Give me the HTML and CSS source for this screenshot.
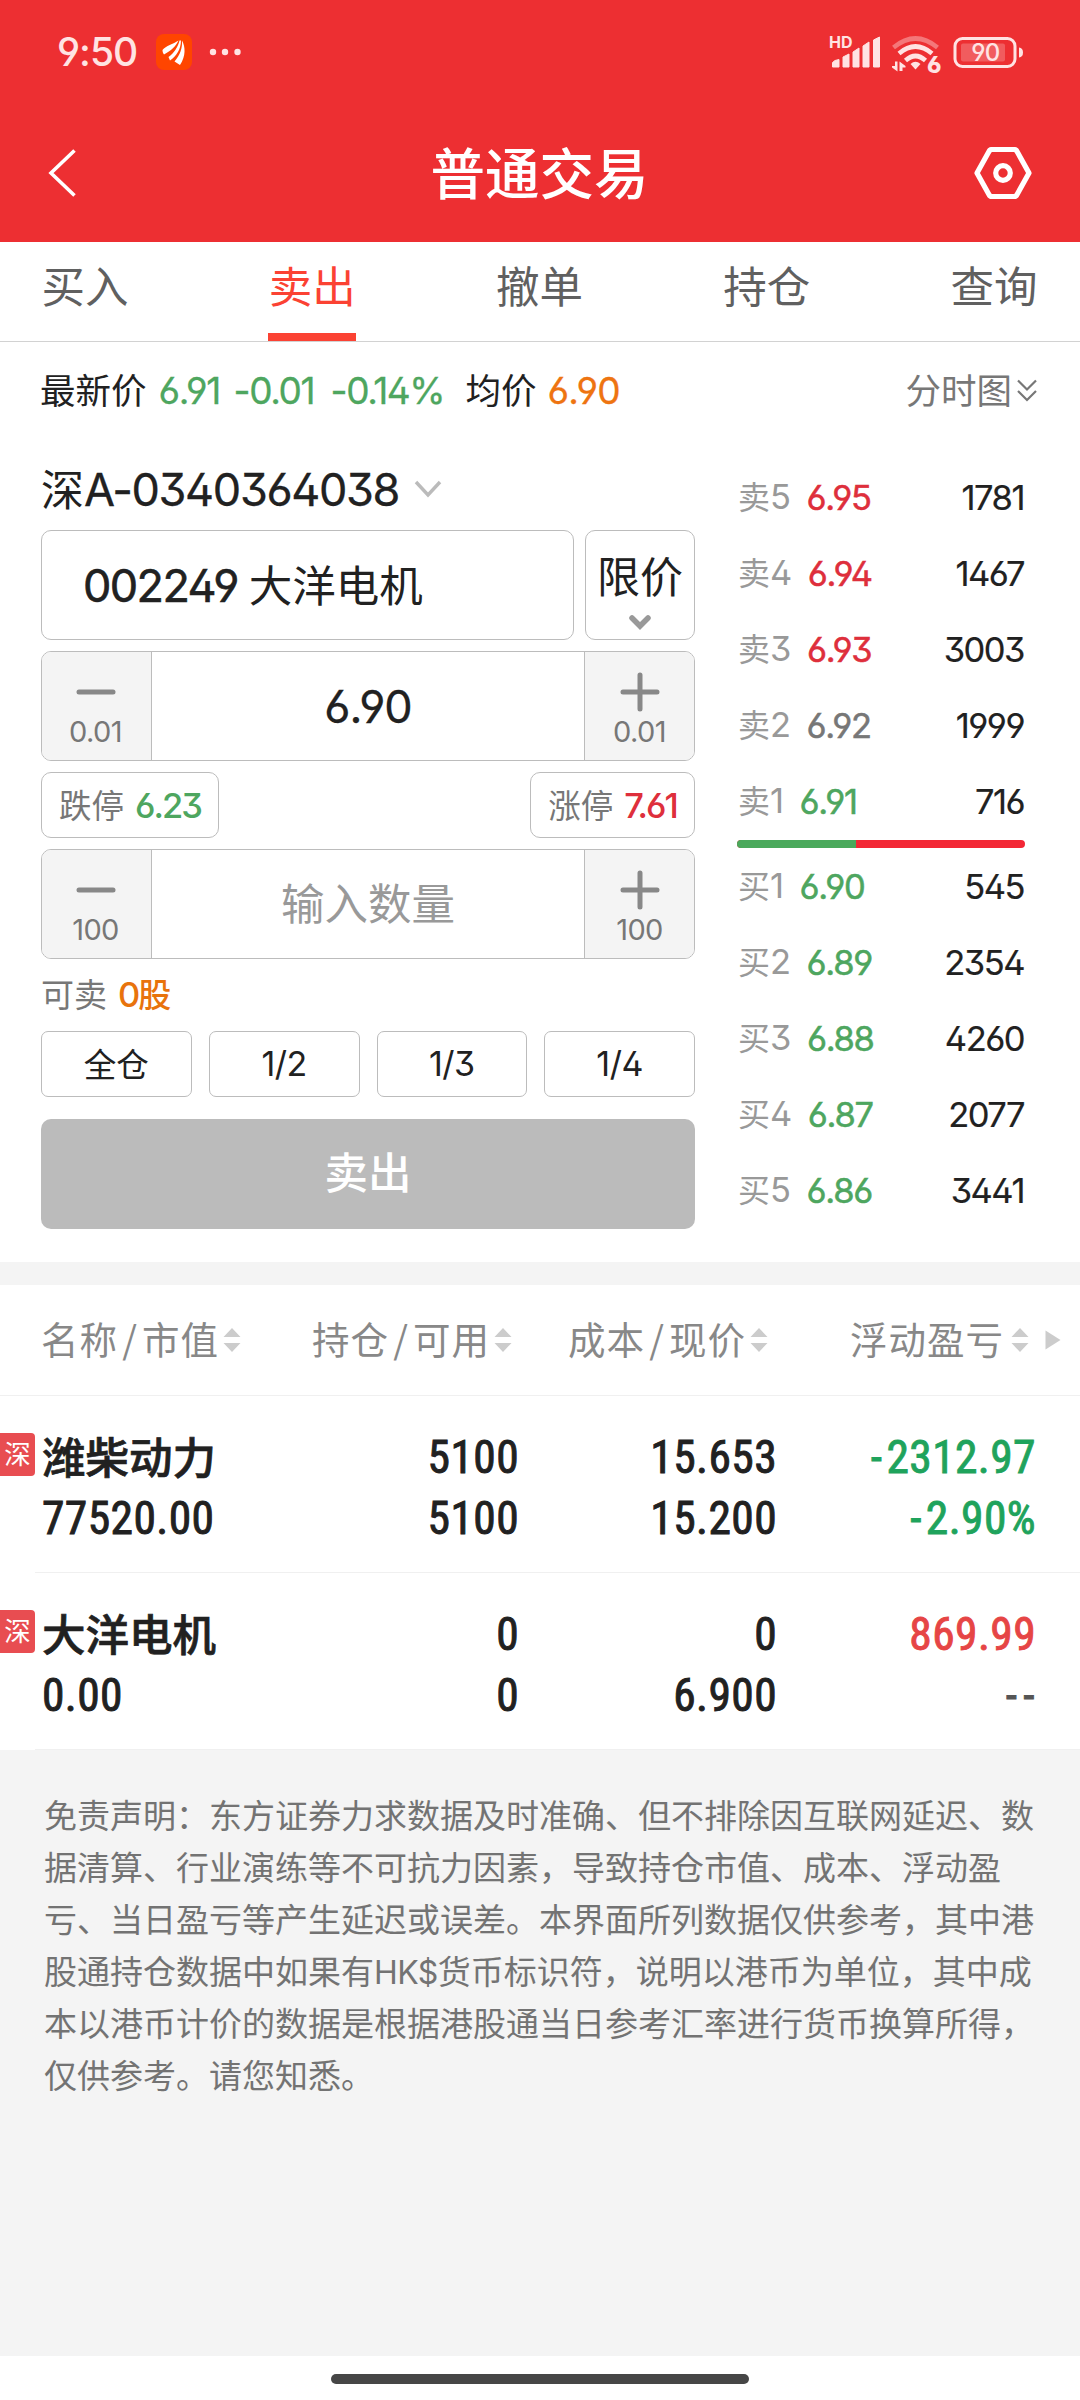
FILE: index.html
```html
<!DOCTYPE html>
<html lang="zh-CN">
<head>
<meta charset="utf-8">
<title>普通交易</title>
<link rel="stylesheet" href="styles.css">
</head>
<body>
<header class="header">
  <div class="status">
    <span class="clock">9:50</span>
    <svg class="app-icon" width="36" height="36" viewBox="0 0 36 36"><rect width="36" height="36" rx="8" fill="#ff4500"/><g fill="#fff"><path d="M6.500 16C10 11.500 17 10.500 22.500 6.500C20 12 15 17 8 20.500C7 19 6.500 18 6.500 16Z"/><path d="M12.500 23C18 19 22 13 23.500 6.500L25 6.500C25 15 20.500 22 14 26.500Z"/><path d="M18.500 27.500C24 21 26.500 14 26 6.500C29.500 13 30 22 24 31Z"/></g></svg>
    <svg class="dots" width="32" height="8" viewBox="0 0 32 8" fill="#ffe3e3"><circle cx="4" cy="4" r="3.200"/><circle cx="16" cy="4" r="3.200"/><circle cx="28.500" cy="4" r="3.200"/></svg>
    <svg class="signals" width="196" height="52" viewBox="0 -4 196 52" fill="#ffe3e3">
      <text x="1" y="18" class="hd">HD</text>
      <path d="M4.500 37V32.500L7 30.500L11 29.500V37ZM15 37V27L21 24V37ZM25 37V22L31 18V37ZM35 37V16L41 12V37ZM45.500 37V10L51.500 7V37Z" stroke="#ffe3e3" stroke-width="1" stroke-linejoin="round"/>
      <g fill="none" stroke="#ffe3e3" stroke-width="4.600"><path d="M65.500 17.500Q87.500 -.5 109.500 17.500" stroke-opacity=".4"/><path d="M71 23.500Q87.500 9.500 104 23.500"/><path d="M77.500 30.500Q87.500 21.500 97.500 30.500"/></g>
      <path d="M82.500 34Q87.500 29.500 92.500 34L87.500 39.500Z"/>
      <path d="M64 36H67V31.500H69.500V41.500L64 37.500ZM71.500 31.500L77.500 36V37.500H74.500V41H71.500Z"/>
      <text x="99" y="42.500" class="wifi-six">6</text>
      <rect x="127" y="8.500" width="60" height="28" rx="7.500" fill="none" stroke="#ffe3e3" stroke-width="3"/>
      <rect x="133" y="13.500" width="44" height="18" rx="2" fill-opacity=".25"/>
      <path d="M191 17.500Q195 18 195 22.500T191 27.500Z"/>
      <text x="157.500" y="31" class="battery">90</text>
    </svg>
  </div>
  <div class="title-bar">
    <svg width="30" height="50" viewBox="0 0 30 50" fill="none" stroke="#fff" stroke-width="3.600"><path d="M27.500 2.500L4 25L27.500 47.500"/></svg>
    <h1>普通交易</h1>
    <svg width="60" height="56" viewBox="0 0 60 56" fill="none" stroke="#fff" stroke-width="5.200" stroke-linejoin="round"><path d="M18 4.500H42L43.500 5.500L56 28L43.500 50.500L42 51.500H18L16.500 50.500L4 28L16.500 5.500Z"/><circle cx="30" cy="28" r="7.300"/></svg>
  </div>
</header>
<nav class="tabs"><a>买入</a><a class="on">卖出</a><a>撤单</a><a>持仓</a><a>查询</a></nav>
<div class="quote">
  <span>最新价</span><b class="green q1">6.91</b><b class="green q2">-0.01</b><b class="green q3">-0.14%</b><span class="avg">均价</span><b class="orange q4">6.90</b>
  <span class="chart">分时图</span><svg width="20" height="24" viewBox="0 0 20 24" fill="none" stroke="#777" stroke-width="2.200"><path d="M1 1.500L10 10.500L19 1.500M1 12L10 21L19 12"/></svg>
</div>
<main class="trade">
  <section class="form">
    <div class="account"><span>深</span><b>A-0340364038</b><svg width="28" height="18" viewBox="0 0 28 18" fill="none" stroke="#bbb" stroke-width="3.400"><path d="M2 2L14 15L26 2"/></svg></div>
    <div class="pick">
      <div class="box stock"><b>002249</b><span>大洋电机</span></div>
      <div class="box limit"><span>限价</span><svg width="24" height="16" viewBox="0 0 24 16" fill="none" stroke="#999" stroke-width="5.500" stroke-linecap="round"><path d="M4 4L12 12L20 4"/></svg></div>
    </div>
    <div class="box stepper">
      <div class="side"><svg width="40" height="40" viewBox="0 0 40 40" stroke="#888" stroke-width="5" stroke-linecap="round"><path d="M3 20H37"/></svg><b>0.01</b></div>
      <div class="value"><b>6.90</b></div>
      <div class="side"><svg width="40" height="40" viewBox="0 0 40 40" stroke="#888" stroke-width="5" stroke-linecap="round"><path d="M3 20H37M20 3V37"/></svg><b>0.01</b></div>
    </div>
    <div class="bounds">
      <div class="box bound down"><span>跌停</span><b class="green">6.23</b></div>
      <div class="box bound up"><span>涨停</span><b class="red">7.61</b></div>
    </div>
    <div class="box stepper">
      <div class="side"><svg width="40" height="40" viewBox="0 0 40 40" stroke="#888" stroke-width="5" stroke-linecap="round"><path d="M3 20H37"/></svg><b>100</b></div>
      <div class="value placeholder">输入数量</div>
      <div class="side"><svg width="40" height="40" viewBox="0 0 40 40" stroke="#888" stroke-width="5" stroke-linecap="round"><path d="M3 20H37M20 3V37"/></svg><b>100</b></div>
    </div>
    <div class="avail"><span>可卖</span><em><b>0</b>股</em></div>
    <div class="parts"><div class="box">全仓</div><div class="box"><b>1/2</b></div><div class="box"><b>1/3</b></div><div class="box"><b>1/4</b></div></div>
    <div class="submit">卖出</div>
  </section>
  <section class="book">
    <div class="lv"><span>卖<b>5</b></span><b class="red">6.95</b><b class="vol">1781</b></div>
    <div class="lv"><span>卖<b>4</b></span><b class="red">6.94</b><b class="vol">1467</b></div>
    <div class="lv"><span>卖<b>3</b></span><b class="red">6.93</b><b class="vol">3003</b></div>
    <div class="lv"><span>卖<b>2</b></span><b class="flat">6.92</b><b class="vol">1999</b></div>
    <div class="lv"><span>卖<b>1</b></span><b class="green">6.91</b><b class="vol">716</b></div>
    <div class="ratio"><i></i></div>
    <div class="lv"><span>买<b>1</b></span><b class="green">6.90</b><b class="vol">545</b></div>
    <div class="lv"><span>买<b>2</b></span><b class="green">6.89</b><b class="vol">2354</b></div>
    <div class="lv"><span>买<b>3</b></span><b class="green">6.88</b><b class="vol">4260</b></div>
    <div class="lv"><span>买<b>4</b></span><b class="green">6.87</b><b class="vol">2077</b></div>
    <div class="lv"><span>买<b>5</b></span><b class="green">6.86</b><b class="vol">3441</b></div>
  </section>
</main>
<section class="holdings">
  <div class="thead">
    <div class="h1c">名称<i>/</i>市值<svg width="18" height="24" viewBox="0 0 18 24" fill="#ccc"><path d="M9 0L17.500 9H.5ZM.5 15H17.500L9 24Z"/></svg></div>
    <div class="h2c">持仓<i>/</i>可用<svg width="18" height="24" viewBox="0 0 18 24" fill="#ccc"><path d="M9 0L17.500 9H.5ZM.5 15H17.500L9 24Z"/></svg></div>
    <div class="h3c">成本<i>/</i>现价<svg width="18" height="24" viewBox="0 0 18 24" fill="#ccc"><path d="M9 0L17.500 9H.5ZM.5 15H17.500L9 24Z"/></svg></div>
    <div class="h4c">浮动盈亏<svg width="18" height="24" viewBox="0 0 18 24" fill="#ccc"><path d="M9 0L17.500 9H.5ZM.5 15H17.500L9 24Z"/></svg></div>
    <svg class="more" width="16" height="20" viewBox="0 0 16 20" fill="#ccc"><path d="M.5 .5L15.500 10L.5 19.500Z"/></svg>
  </div>
  <div class="row">
    <div class="badge">深</div>
    <div class="cells">
      <strong>潍柴动力</strong><b>5100</b><b>15.653</b><b class="loss"><i>-</i>2312.97</b>
      <b>77520.00</b><b>5100</b><b>15.200</b><b class="loss"><i>-</i>2.90%</b>
    </div>
  </div>
  <div class="row">
    <div class="badge">深</div>
    <div class="cells">
      <strong>大洋电机</strong><b>0</b><b>0</b><b class="gain">869.99</b>
      <b>0.00</b><b>0</b><b>6.900</b><b class="none"><i>-</i><i>-</i></b>
    </div>
  </div>
</section>
<footer class="note">
  <p>免责声明：东方证券力求数据及时准确、但不排除因互联网延迟、数<br>据清算、行业演练等不可抗力因素，导致持仓市值、成本、浮动盈<br>亏、当日盈亏等产生延迟或误差。本界面所列数据仅供参考，其中港<br>股通持仓数据中如果有<b>HK$</b>货币标识符，说明以港币为单位，其中成<br>本以港币计价的数据是根据港股通当日参考汇率进行货币换算所得，<br>仅供参考。请您知悉。</p>
</footer>
<div class="home"><i></i></div>
</body>
</html>
```
FILE: styles.css
```css
* { box-sizing: border-box; margin: 0; padding: 0; }
body { width: 1080px; height: 2400px; display: flex; flex-direction: column; overflow: hidden; background: #fff; color: #212121; font-family: "Noto Sans CJK SC", sans-serif; }
b { font-family: Inter, "Noto Sans CJK SC", sans-serif; font-weight: 400; font-feature-settings: "ss01"; }
i, em { font-style: normal; }
svg { flex: none; display: block; }
svg text { font-family: Inter, sans-serif; font-feature-settings: "ss01"; }
.green { color: #4ea65f; }
.red { color: #de2f3c; }
.orange { color: #ee7411; }

.header { flex: none; height: 242px; background: #ed2f32; color: #fff; }
.status { display: flex; align-items: center; height: 104px; padding: 0 56px 0 57px; }
.clock { width: 99px; font: 500 39px/44px Inter, sans-serif; font-feature-settings: "ss01"; letter-spacing: -1px; color: #ffe3e3; }
.dots { margin-left: 17px; }
.signals { margin-left: auto; }
.hd { font-size: 16px; font-weight: 700; }
.wifi-six { font-size: 23px; font-weight: 800; }
.battery { font-size: 24px; font-weight: 500; text-anchor: middle; letter-spacing: -.5px; }
.title-bar { display: flex; align-items: center; justify-content: space-between; height: 138px; padding: 0 47px; }
.title-bar h1 { font-size: 54.500px; font-weight: 500; line-height: 60px; margin: 0 0 5px 29px; }

.tabs { flex: none; display: flex; justify-content: space-between; height: 100px; padding: 0 42px 0 41px; border-bottom: 1px solid #d2d2d2; color: #606060; font-size: 43.500px; }
.tabs a { width: 88px; text-align: center; line-height: 85px; }
.tabs .on { color: #fb4233; border-bottom: 8px solid #fb4233; }

.quote { flex: none; display: flex; align-items: center; height: 97px; padding: 0 43px 0 40px; font-size: 35.500px; }
.quote span { padding-bottom: 4px; }
.quote b { font-size: 37px; letter-spacing: -1.400px; white-space: nowrap; -webkit-text-stroke: .3px currentColor; }
.quote .q1 { width: 75px; margin-left: 12px; }
.quote .q4 { letter-spacing: -.7px; }
.q2 { width: 97px; }
.q3 { width: 135px; }
.avg { width: 82px; }
.quote .chart { margin-left: auto; margin-right: 5px; color: #777; }

.trade { flex: none; display: flex; height: 823px; padding: 0 55px 0 41px; }
.form { width: 654px; }
.account { display: flex; align-items: center; height: 91px; padding-top: 9px; font-size: 43px; }
.account span { padding-bottom: 4px; }
.account b { font-size: 45px; letter-spacing: -1.350px; width: 330px; white-space: nowrap; -webkit-text-stroke: .3px currentColor; }
.box { border: 1px solid #bcbcbc; border-radius: 10px; background: #fff; }
.pick { display: flex; gap: 11px; }
.stock { display: flex; align-items: center; gap: 11px; width: 533px; height: 110px; padding-left: 41px; font-size: 43.500px; }
.stock span { padding-bottom: 4px; }
.stock b { font-size: 45px; letter-spacing: -1.600px; -webkit-text-stroke: .6px currentColor; }
.limit { display: flex; flex-direction: column; align-items: center; width: 110px; font-size: 43px; padding-top: 13px; line-height: 60px; gap: 10px; }
.stepper { display: flex; height: 110px; margin-top: 11px; overflow: hidden; }
.side { display: flex; flex-direction: column; align-items: center; width: 109px; padding-top: 20px; background: #f4f4f4; color: #777; }
.side:first-child { padding-right: 2px; }
.side b { font-size: 29px; line-height: 40px; letter-spacing: -.6px; }
.value { flex: 1; display: flex; align-items: center; justify-content: center; border: solid #bcbcbc; border-width: 0 1px; font-size: 43.500px; }
.value b { font-size: 45px; letter-spacing: -1px; -webkit-text-stroke: .3px currentColor; }
.placeholder { color: #999; padding-bottom: 5px; }
.bounds { display: flex; justify-content: space-between; margin-top: 11px; }
.bound { display: flex; align-items: center; justify-content: center; gap: 11px; height: 66px; font-size: 32.500px; color: #777; white-space: nowrap; }
.bound span { padding-bottom: 4px; }
.bound b { font-size: 34.500px; font-weight: 450; letter-spacing: -2px; }
.down { width: 178px; }
.up { width: 165px; }
.avail { display: flex; align-items: center; gap: 11px; height: 72px; padding-bottom: 4px; font-size: 33px; color: #777; }
.avail em { color: #e8730c; font-weight: 500; }
.avail em b { font-size: 34.500px; font-weight: 500; letter-spacing: -2px; }
.parts { display: grid; grid-template-columns: repeat(4, 1fr); gap: 17px; height: 66px; }
.parts .box { display: flex; align-items: center; justify-content: center; border-radius: 7px; font-size: 32.500px; padding-bottom: 3px; }
.parts b { font-size: 34px; letter-spacing: -.5px; padding-top: 2px; }
.submit { height: 110px; margin-top: 22px; border-radius: 10px; background: #bbb; color: #fff; font-size: 43.500px; font-weight: 500; line-height: 104px; text-align: center; }

.book { width: 288px; margin-left: 42px; padding-top: 20px; }
.lv { display: flex; align-items: center; height: 76px; padding: 0 1px; white-space: nowrap; }
.lv span { display: flex; align-items: center; color: #999; font-size: 32px; line-height: 50px; height: 54px; padding-bottom: 4px; margin-right: 17px; }
.lv span b { font-size: 34.500px; letter-spacing: -1.500px; padding-top: 4px; }
.lv > b { font-size: 34.500px; letter-spacing: -1.300px; -webkit-text-stroke: .5px currentColor; }
.lv .vol { margin-left: auto; letter-spacing: -1.500px; -webkit-text-stroke: .2px currentColor; }
.flat { color: #777; }
.ratio { height: 8px; margin-top: 1px; border-radius: 4px; background: #f32735; overflow: hidden; }
.ratio i { display: block; width: 119px; height: 8px; background: #4aa95c; }

.holdings { flex: none; border-top: 23px solid #f4f4f4; }
.thead { display: flex; align-items: center; height: 111px; border-bottom: 1px solid #f0f0f0; color: #888; font-size: 37.500px; letter-spacing: 1px; padding-left: 41px; white-space: nowrap; }
.thead div { display: flex; align-items: center; padding-bottom: 5px; }
.thead i { width: 24px; text-align: center; }
.thead div svg { margin: 4px 0 0 4px; }
.h1c { width: 271px; }
.h2c { width: 256px; }
.h3c { width: 282px; }
.h4c { width: 195px; }
.thead .h4c svg { margin-left: 7px; }
.row { display: flex; height: 177px; padding-top: 31px; }
.badge { width: 35px; height: 43px; margin-top: 6px; border-radius: 0 4px 4px 0; background: #e84d51; color: #fff; font-size: 26.500px; line-height: 39px; text-align: center; }
.cells { flex: 1; display: grid; grid-template-columns: 230px 247px 258px 259px; grid-template-rows: 61px 61px; padding-left: 7px; height: 146px; border-bottom: 1px solid #f0f0f0; text-align: right; }
.cells b { font: 400 45.500px/61px Roboto, sans-serif; font-stretch: 87.500%; letter-spacing: .4px; -webkit-text-stroke: .9px currentColor; }
.cells b i { margin-right: 4px; }
.cells strong, .cells b:nth-child(5) { text-align: left; }
.cells strong { font-size: 43.500px; font-weight: 500; line-height: 58px; -webkit-text-stroke: .7px #212121; }
.cells .loss { color: #1fa35c; }
.cells .gain { color: #e64545; }
.cells .none { color: #555; }
.cells .none i { margin: 0 1px 0 5px; }

.note { flex: 1; padding: 38px 44px; background: #f4f4f4; color: #737373; font-size: 33px; line-height: 52px; white-space: nowrap; }
.note b { font-size: 32px; line-height: 1; letter-spacing: -.6px; }
.home { flex: none; display: flex; justify-content: center; height: 44px; padding-top: 18px; background: #fff; }
.home i { width: 418px; height: 10px; border-radius: 5px; background: #464646; }
```
